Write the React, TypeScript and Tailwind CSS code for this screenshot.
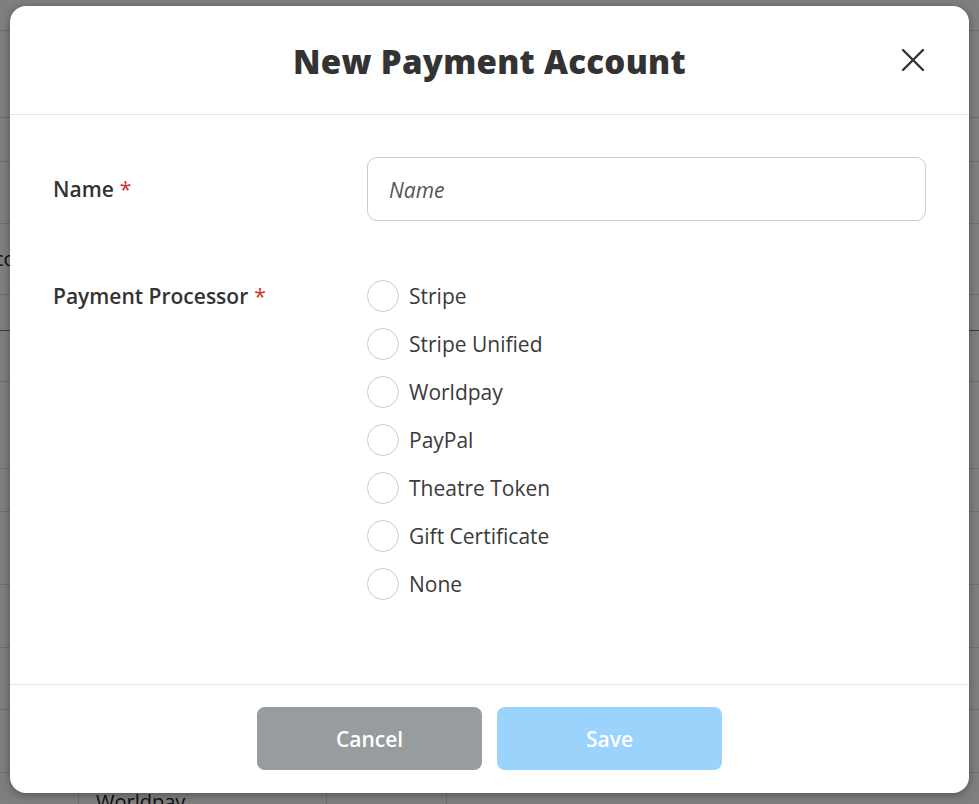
import React, { useState } from 'react';

const processors = ['Stripe', 'Stripe Unified', 'Worldpay', 'PayPal', 'Theatre Token', 'Gift Certificate', 'None'];

// rows of the page that sits behind the dimmed overlay
const bgRows: { h: string; text?: string; dark?: boolean }[] = [
  { h: 'h-[87px]' },
  { h: 'h-[44px]' },
  { h: 'h-[62px]' },
  { h: 'h-[71px]', text: 'co' },
  { h: 'h-[36px]' },
  { h: 'h-[51px]', dark: true },
  { h: 'h-[87px]' },
  { h: 'h-[43px]' },
  { h: 'h-[73px]' },
  { h: 'h-[63px]' },
  { h: 'h-[62px]' },
  { h: 'h-[63px]' },
  { h: 'h-[60px]', text: 'Worldpay' },
];

const Required = () => <span className="ml-[6px] font-normal text-[#c9302c]">*</span>;

const CloseIcon = () => (
  <svg width="24" height="24" viewBox="0 0 24 24" fill="none" stroke="#333" strokeWidth="2.4" strokeLinecap="round">
    <path d="M2 2 L22 22 M22 2 L2 22" />
  </svg>
);

export default function App() {
  const [name, setName] = useState('');
  const [processor, setProcessor] = useState<string | null>(null);

  return (
    <div className="relative h-[804px] w-[979px] overflow-hidden bg-white font-['Open_Sans',sans-serif] text-[#333]">
      {/* page behind the modal */}
      <div className="flex flex-col pt-[30px]">
        {bgRows.map((r, i) => (
          <div key={i} className={`flex ${r.h} border-t ${r.dark ? 'border-[#777]' : 'border-[#ddd]'}`}>
            {r.text === 'co' ? (
              <div className="-ml-[6px] flex items-center text-[20px] text-[#222]">co</div>
            ) : (
              <>
                <div className="w-[78px] shrink-0" />
                <div className="h-full w-[248px] border-l border-[#ddd] pl-[17px] pt-[14px] text-[20px] text-[#222]">{r.text}</div>
                <div className="h-full w-[120px] border-l border-[#ddd]" />
                <div className="h-full flex-1 border-l border-[#ddd]" />
              </>
            )}
          </div>
        ))}
      </div>
      <div className="absolute inset-0 bg-black/50" />

      {/* modal */}
      <div className="absolute inset-0 flex items-start justify-center pt-[6px]">
        <div className="flex h-[787px] w-[959px] flex-col rounded-[16px] bg-white shadow-[0_2px_10px_rgba(0,0,0,0.35)]">
          <header className="relative flex h-[109px] shrink-0 items-center justify-center border-b border-[#e6e6e6] pt-[3px]">
            <h2 className="text-[33px] font-extrabold tracking-[0.3px] text-[#333]">New Payment Account</h2>
            <button className="absolute right-[44px] top-[42px]" aria-label="Close">
              <CloseIcon />
            </button>
          </header>

          <main className="flex-1 px-[43px] pt-[42px]">
            <div className="flex items-center">
              <label className="w-[314px] shrink-0 pt-[2px] text-[21px] font-semibold">
                Name
                <Required />
              </label>
              <input
                value={name}
                onChange={e => setName(e.target.value)}
                placeholder="Name"
                className="h-[64px] flex-1 rounded-[10px] border border-[#cccccc] px-[21px] pt-[2px] text-[21px] italic text-[#333] outline-none placeholder:text-[#555]"
              />
            </div>

            <div className="mt-[59px] flex items-start">
              <label className="flex h-[32px] w-[314px] shrink-0 items-center pt-[2px] text-[21px] font-semibold">
                Payment Processor
                <Required />
              </label>
              <div className="flex flex-col gap-[16px]">
                {processors.map(p => (
                  <label key={p} className="flex h-[32px] cursor-pointer items-center gap-[10px]" onClick={() => setProcessor(p)}>
                    <span className={`h-[32px] w-[32px] shrink-0 rounded-full border ${processor === p ? 'border-[8px] border-[#2b9af3]' : 'border-[#cccccc]'}`} />
                    <span className="pt-[2px] text-[21px] text-[#3a3a3a]">{p}</span>
                  </label>
                ))}
              </div>
            </div>
          </main>

          <footer className="flex h-[109px] shrink-0 items-start justify-center gap-[15px] border-t border-[#e6e6e6] pt-[22px]">
            <button className="h-[63px] w-[225px] rounded-[8px] bg-[#979c9f] pt-[2px] text-[21px] font-semibold text-white">Cancel</button>
            <button className="h-[63px] w-[225px] rounded-[8px] bg-[#9ad4fd] pt-[2px] text-[21px] font-semibold text-white">Save</button>
          </footer>
        </div>
      </div>
    </div>
  );
}
